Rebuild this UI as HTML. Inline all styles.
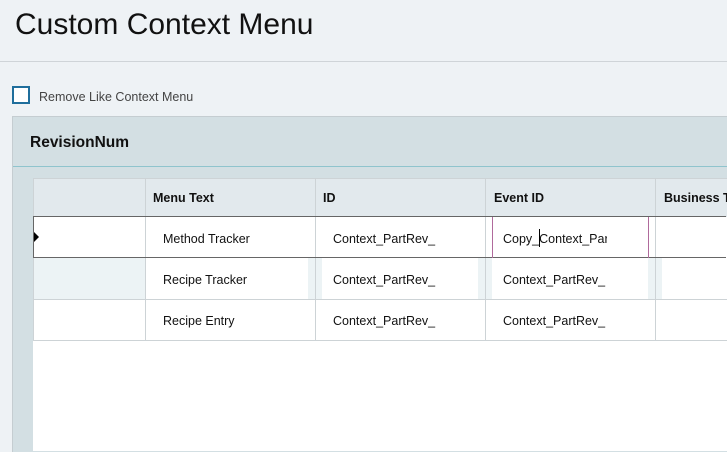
<!DOCTYPE html>
<html><head><style>
body{margin:0;width:727px;height:451px;overflow:hidden;background:#eef2f5;font-family:"Liberation Sans",sans-serif;position:relative}
.a{position:absolute}
.t{white-space:nowrap}
</style></head><body>
<div class="a t" style="left:15px;top:5px;font-size:30px;color:#111;line-height:40px">Custom Context Menu</div>
<div class="a" style="left:0;top:61px;width:727px;height:1px;background:#cfd4d8"></div>
<div class="a" style="left:12px;top:86px;width:14px;height:14px;border:2px solid #1f6e9c;background:#fff"></div>
<div class="a t" style="left:39px;top:90px;font-size:12.5px;color:#444">Remove Like Context Menu</div>
<div class="a" style="left:12px;top:116px;width:715px;height:335px;background:#d3dfe3;border-top:1px solid #c5cdd1;border-left:1px solid #c5cdd1"></div>
<div class="a t" style="left:30px;top:134px;font-size:15.5px;font-weight:bold;color:#111">RevisionNum</div>
<div class="a" style="left:13px;top:166px;width:714px;height:1px;background:#8fc4cd"></div>
<div class="a" style="left:33px;top:178px;width:694px;height:273px;background:#fff"></div>
<div class="a" style="left:33px;top:178px;width:694px;height:38px;background:#e2e9ed;border-top:1px solid #cdd3d6"></div>
<div class="a t" style="left:153px;top:191px;font-size:12.5px;font-weight:bold;color:#111">Menu Text</div>
<div class="a t" style="left:323px;top:191px;font-size:12.5px;font-weight:bold;color:#111">ID</div>
<div class="a t" style="left:494px;top:191px;font-size:12.5px;font-weight:bold;color:#111">Event ID</div>
<div class="a t" style="left:664px;top:191px;font-size:12.5px;font-weight:bold;color:#111">Business T</div>
<div class="a" style="left:33px;top:258px;width:112px;height:41px;background:#ecf3f5"></div>
<div class="a" style="left:308px;top:258px;width:14px;height:41px;background:#ecf3f5"></div>
<div class="a" style="left:478px;top:258px;width:14px;height:41px;background:#ecf3f5"></div>
<div class="a" style="left:648px;top:258px;width:14px;height:41px;background:#ecf3f5"></div>
<div class="a" style="left:145px;top:178px;width:1px;height:162px;background:#cdd3d6"></div>
<div class="a" style="left:315px;top:178px;width:1px;height:162px;background:#cdd3d6"></div>
<div class="a" style="left:485px;top:178px;width:1px;height:162px;background:#cdd3d6"></div>
<div class="a" style="left:655px;top:178px;width:1px;height:162px;background:#cdd3d6"></div>
<div class="a" style="left:33px;top:178px;width:1px;height:162px;background:#cdd3d6"></div>
<div class="a" style="left:33px;top:299px;width:694px;height:1px;background:#cdd3d6"></div>
<div class="a" style="left:33px;top:340px;width:694px;height:1px;background:#cdd3d6"></div>
<div class="a" style="left:33px;top:216px;width:692px;height:40px;border:1px solid #666;border-right:none"></div>
<div class="a" style="left:492px;top:217px;width:1px;height:41px;background:#b06a9c"></div>
<div class="a" style="left:648px;top:217px;width:1px;height:41px;background:#b06a9c"></div>
<div class="a" style="left:34px;top:232px;width:0;height:0;border-top:5px solid transparent;border-bottom:5px solid transparent;border-left:5px solid #000"></div>
<div style="font-size:12.5px;color:#111">
<div class="a t" style="left:163px;top:232px">Method Tracker</div>
<div class="a t" style="left:333px;top:232px">Context_PartRev_</div>
<div class="a t" style="left:503px;top:232px;width:104px;overflow:hidden">Copy_Context_PartRev_</div>
<div class="a" style="left:539px;top:229px;width:1px;height:18px;background:#000"></div>
<div class="a t" style="left:163px;top:273px">Recipe Tracker</div>
<div class="a t" style="left:333px;top:273px">Context_PartRev_</div>
<div class="a t" style="left:503px;top:273px">Context_PartRev_</div>
<div class="a t" style="left:163px;top:314px">Recipe Entry</div>
<div class="a t" style="left:333px;top:314px">Context_PartRev_</div>
<div class="a t" style="left:503px;top:314px">Context_PartRev_</div>
</div>
</body></html>
